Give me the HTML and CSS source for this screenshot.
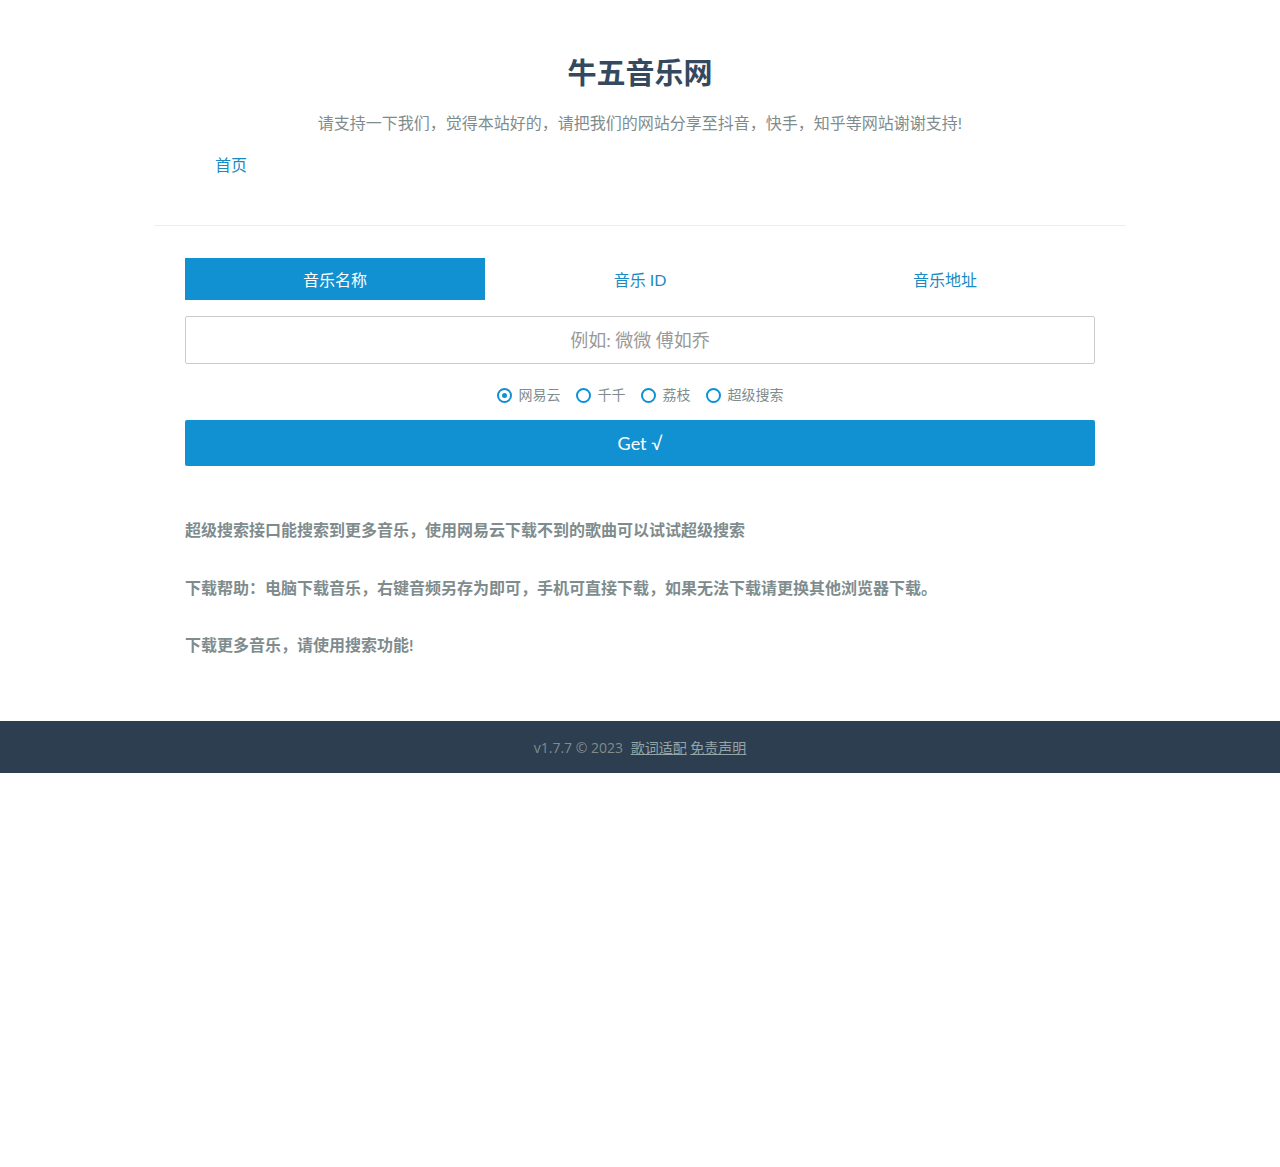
FILE: index.html
```html
<!DOCTYPE html>
<html lang="zh-CN">
<head>
<meta charset="utf-8">
<title>牛五音乐网</title>
<link rel="stylesheet" href="styles.css">
</head>
<body>
<div class="page">
  <header class="header">
    <h1 class="title">牛五音乐网</h1>
    <p class="subtitle">请支持一下我们，觉得本站好的，请把我们的网站分享至抖音，快手，知乎等网站谢谢支持!</p>
    <nav class="nav"><a class="nav-link" href="#">首页</a></nav>
  </header>
  <main class="main">
    <div class="tabs">
      <a class="tab tab-active" href="#">音乐名称</a>
      <a class="tab" href="#">音乐 ID</a>
      <a class="tab" href="#">音乐地址</a>
    </div>
    <input class="search" type="text" placeholder="例如: 微微 傅如乔">
    <div class="sources">
      <label class="source"><span class="radio radio-on"></span>网易云</label>
      <label class="source"><span class="radio"></span>千千</label>
      <label class="source"><span class="radio"></span>荔枝</label>
      <label class="source"><span class="radio"></span>超级搜索</label>
    </div>
    <button class="get" type="button">Get √</button>
    <div class="notes">
      <p class="note">超级搜索接口能搜索到更多音乐，使用网易云下载不到的歌曲可以试试超级搜索</p>
      <p class="note">下载帮助：电脑下载音乐，右键音频另存为即可，手机可直接下载，如果无法下载请更换其他浏览器下载。</p>
      <p class="note">下载更多音乐，请使用搜索功能!</p>
    </div>
  </main>
</div>
<footer class="footer">
  <span class="version">v1.7.7 © 2023</span>
  <a class="foot-link" href="#">歌词适配</a> <a class="foot-link" href="#">免责声明</a>
</footer>
</body>
</html>
```
FILE: styles.css
```css
html, body {
  margin: 0;
  padding: 0;
  background: #fff;
}
body {
  font-family: Lato, "Noto Sans CJK SC", sans-serif;
  color: #34495e;
}
.page {
  width: 972px;
  margin: 0 auto;
}
.header {
  padding-top: 53px;
  border-bottom: 1px solid #eee;
  padding-bottom: 48px;
}
.title {
  margin: 0;
  text-align: center;
  font-size: 29px;
  line-height: 40px;
  font-weight: 700;
  color: #34495e;
}
.subtitle {
  margin: 18px 0 0;
  text-align: center;
  font-size: 16px;
  line-height: 24px;
  color: #7f8c8d;
}
.nav {
  margin-top: 18px;
  padding-left: 61px;
  line-height: 24px;
}
.nav-link {
  font-size: 16px;
  color: #1a8ac4;
  text-decoration: none;
}
.main {
  padding: 32px 31px 0;
}
.tabs {
  display: flex;
  gap: 5px;
}
.tab {
  flex: 1;
  height: 42px;
  line-height: 44px;
  text-align: center;
  font-size: 16px;
  color: #1a8ac4;
  text-decoration: none;
}
.tab-active {
  background: #1190d2;
  color: #fff;
}
.search {
  display: block;
  box-sizing: border-box;
  width: 100%;
  height: 48px;
  margin-top: 16px;
  border: 1px solid #cccccc;
  border-radius: 2px;
  font-family: Lato, "Noto Sans CJK SC", sans-serif;
  font-size: 18px;
  text-align: center;
  color: #555;
  outline: none;
}
.search::placeholder {
  color: #999;
}
.sources {
  display: flex;
  justify-content: center;
  gap: 15px;
  margin-top: 21px;
  height: 20px;
  align-items: center;
}
.source {
  display: flex;
  align-items: center;
  gap: 7px;
  font-size: 14px;
  color: #7f8c8d;
  line-height: 20px;
}
.radio {
  box-sizing: border-box;
  width: 15px;
  height: 15px;
  border: 2.5px solid #1190d2;
  border-radius: 50%;
  display: flex;
  align-items: center;
  justify-content: center;
}
.radio-on::after {
  content: "";
  width: 5px;
  height: 5px;
  border-radius: 50%;
  background: #1190d2;
}
.get {
  display: block;
  width: 100%;
  height: 46px;
  margin-top: 15px;
  border: none;
  border-radius: 2px;
  background: #1190d2;
  color: #fff;
  font-family: Lato, "Noto Sans CJK SC", sans-serif;
  font-size: 18px;
  cursor: pointer;
}
.notes {
  padding-top: 52px;
  padding-bottom: 64px;
}
.note {
  margin: 0 0 33.5px;
  font-size: 16px;
  line-height: 24px;
  font-weight: 700;
  color: #7f8c8d;
}
.note:last-child {
  margin-bottom: 0;
}
.footer {
  height: 52px;
  line-height: 54px;
  background: #2c3e50;
  text-align: center;
  font-size: 14px;
  color: #7f8c8d;
  font-family: "Open Sans", "Noto Sans CJK SC", sans-serif;
}
.version {
  margin-right: 4px;
}
.foot-link {
  color: #95a5a6;
  text-decoration: underline;
}
```
